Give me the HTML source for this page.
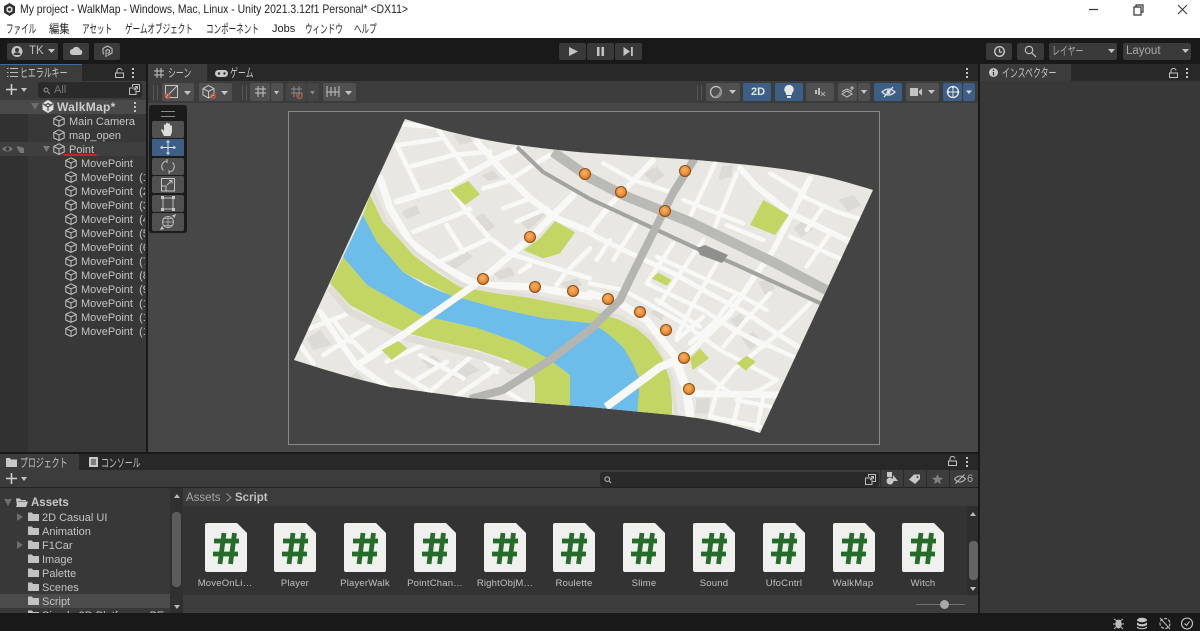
<!DOCTYPE html>
<html><head><meta charset="utf-8"><style>
html{background:#191919}
html,body{margin:0;padding:0;width:1200px;height:631px;overflow:hidden}
body{position:relative;background:#191919;font-family:"Liberation Sans","Noto Sans CJK JP",sans-serif;color:#c4c4c4;font-size:11px;filter:blur(.35px)}
.a{position:absolute}
.t{position:absolute;white-space:nowrap;line-height:14px}
.j{position:absolute;white-space:nowrap;line-height:14px;font-size:12px;transform:scaleX(.66);transform-origin:0 50%}
.m{position:absolute;white-space:nowrap;line-height:14px;font-size:12px;color:#222;top:22px;transform:scaleX(.63);transform-origin:0 50%}
.b{position:absolute;background:#505050;border-radius:2px}
.bl{position:absolute;background:#3e5f85;border-radius:2px}
.row{position:absolute;white-space:nowrap;line-height:14px;height:14px;font-size:11px;margin-top:1px}
.lab{position:absolute;width:70px;text-align:center;font-size:9.5px;color:#c0c0c0;letter-spacing:.2px;line-height:12px}
svg{position:absolute;overflow:visible}
</style></head><body>
<svg width="0" height="0" style="position:absolute"><defs>
<g id="cube"><path d="M6 .8 11.200 3.400V9L6 11.400.8 9V3.400ZM.8 3.400 6 6 11.200 3.400M6 6V11.400" fill="none" stroke="#c4c4c4" stroke-width="1"/></g>
<g id="folder"><path d="M0 1.500h4l1 1.500h6v7H0z" fill="#c2c2c2"/></g>
<g id="cs"><path d="M0 2a2 2 0 0 1 2-2H32L42 10V47a2 2 0 0 1-2 2H2a2 2 0 0 1-2-2Z" fill="#f0f0ee"/><path d="M19 10 15 41M29.500 10 25.500 41M9 18H34M8 31H33" fill="none" stroke="#256c2a" stroke-width="4.800"/></g>
<g id="tri"><path d="M0 0H7L3.500 4Z" fill="#c4c4c4"/></g>
<g id="dots"><rect x="0" y="0" width="2" height="2" fill="#c4c4c4"/><rect x="0" y="4" width="2" height="2" fill="#c4c4c4"/><rect x="0" y="8" width="2" height="2" fill="#c4c4c4"/></g>
<g id="lock"><path d="M2 5V2.500a2.500 2 0 0 1 5 0M.5 5H8.500V9.500H.5Z" fill="none" stroke="#c4c4c4" stroke-width="1"/></g>
<radialGradient id="mk" cx=".45" cy=".4" r=".6"><stop offset="0" stop-color="#f7b566"/><stop offset=".7" stop-color="#ea8a34"/><stop offset="1" stop-color="#c46a1e"/></radialGradient>
<clipPath id="mapc"><path d="M405 119C440 130 480 140 517 145C540 148 565 151 590 153L697 160C740 164 775 167 807 173C830 177 850 183 873 190L760 433C725 422 700 418 673 415L590 407 470 398 390 387C355 379 325 370 294 360Z"/></clipPath>
</defs></svg>

<!-- title + menu -->
<div class="a" style="left:0;top:0;width:1200px;height:38px;background:#fff"></div>
<svg style="left:3px;top:3px" width="13" height="13" viewBox="0 0 13 13"><path d="M6.500 0 12 3.200V9.800L6.500 13 1 9.800V3.200Z" fill="#2e2e2e"/><path d="M6.500 3 9.500 4.700V8.300L6.500 10 3.500 8.300V4.700Z" fill="#ddd"/><circle cx="6.500" cy="6.500" r="1.500" fill="#2e2e2e"/></svg>
<div class="t" style="left:20px;top:3px;color:#222;font-size:11.600px;transform:scaleX(.9);transform-origin:0 50%">My project - WalkMap - Windows, Mac, Linux - Unity 2021.3.12f1 Personal* &lt;DX11&gt;</div>
<div class="m" style="left:6px">ファイル</div>
<div class="m" style="left:49px;transform:scaleX(.85)">編集</div>
<div class="m" style="left:82px">アセット</div>
<div class="m" style="left:125px">ゲームオブジェクト</div>
<div class="m" style="left:206px">コンポーネント</div>
<div class="t" style="left:272px;top:22px;color:#222;font-size:11px">Jobs</div>
<div class="m" style="left:305px">ウィンドウ</div>
<div class="m" style="left:354px">ヘルプ</div>
<svg style="left:1088px;top:4px" width="100" height="12" viewBox="0 0 100 12"><path d="M1 5.500H10" stroke="#333" stroke-width="1.200"/><path d="M46 3H53V11H46ZM48 3V1H55V8H53" fill="none" stroke="#333" stroke-width="1.200"/><path d="M90 1 99 10M99 1 90 10" stroke="#333" stroke-width="1"/></svg>

<!-- top toolbar -->
<div class="b" style="left:7px;top:43px;width:51px;height:17px;background:#3a3a3a"></div>
<svg style="left:11px;top:45px" width="13" height="13" viewBox="0 0 13 13"><circle cx="6" cy="6.500" r="5.500" fill="#c4c4c4"/><circle cx="6" cy="5" r="2" fill="#3a3a3a"/><path d="M2.500 10a3.500 2.800 0 0 1 7 0Z" fill="#3a3a3a"/></svg>
<div class="t" style="left:29px;top:44px;color:#bbb;font-size:11.500px">TK</div>
<svg style="left:48px;top:49px" width="7" height="4"><use href="#tri"/></svg>
<div class="b" style="left:63px;top:43px;width:26px;height:17px;background:#3a3a3a"></div>
<svg style="left:70px;top:46px" width="13" height="9" viewBox="0 0 13 9"><path d="M3 9a3 3 0 0 1-.3-6A4 4 0 0 1 10 3.500 2.800 2.800 0 0 1 10 9Z" fill="#c8c8c8"/></svg>
<div class="b" style="left:94px;top:43px;width:26px;height:17px;background:#3a3a3a"></div>
<svg style="left:102px;top:45px" width="11" height="13" viewBox="0 0 11 13"><path d="M2 9.500 1 8V3.500L5.500 1 10 3.500V8L5.500 10.500M4 12V5.500L5.500 4.500 7.500 5.500V7.500L5.500 8.500" fill="none" stroke="#bdbdbd" stroke-width="1.100"/></svg>

<div class="b" style="left:559px;top:43px;width:27px;height:17px;background:#393939"></div>
<div class="b" style="left:587px;top:43px;width:27px;height:17px;background:#393939"></div>
<div class="b" style="left:615px;top:43px;width:27px;height:17px;background:#393939"></div>
<svg style="left:569px;top:46px" width="70" height="11" viewBox="0 0 70 11"><path d="M0 1 9 5.500 0 10Z" fill="#c4c4c4"/><path d="M28 1h2.500v9H28ZM32.500 1H35v9h-2.500Z" fill="#c4c4c4"/><path d="M54.500 1 61 5.500 54.500 10Z M62 1h1.800v9H62Z" fill="#c4c4c4"/></svg>

<div class="b" style="left:986px;top:43px;width:26px;height:17px;background:#3a3a3a"></div>
<svg style="left:993px;top:45px" width="13" height="13" viewBox="0 0 13 13"><circle cx="6.500" cy="6.500" r="4.800" fill="none" stroke="#c8c8c8" stroke-width="1.400"/><path d="M6.500 3.800V7H9" fill="none" stroke="#c8c8c8" stroke-width="1.200"/></svg>
<div class="b" style="left:1017px;top:43px;width:27px;height:17px;background:#3a3a3a"></div>
<svg style="left:1024px;top:45px" width="13" height="13" viewBox="0 0 13 13"><circle cx="5" cy="5" r="3.700" fill="none" stroke="#c8c8c8" stroke-width="1.100"/><path d="M8 8 12 12" stroke="#c8c8c8" stroke-width="1.200"/></svg>
<div class="b" style="left:1049px;top:43px;width:68px;height:17px;background:#3a3a3a"></div>
<div class="j" style="left:1052px;top:44px;color:#aaa">レイヤー</div>
<svg style="left:1108px;top:49px" width="7" height="4"><use href="#tri"/></svg>
<div class="b" style="left:1123px;top:43px;width:68px;height:17px;background:#3a3a3a"></div>
<div class="t" style="left:1126px;top:44px;font-size:11.500px;color:#aaa">Layout</div>
<svg style="left:1182px;top:49px" width="7" height="4"><use href="#tri"/></svg>

<!-- hierarchy -->
<div class="a" style="left:0;top:64px;width:146px;height:388px;background:#383838;overflow:hidden">
 <div class="a" style="left:0;top:0;width:146px;height:17px;background:#282828"></div>
 <div class="a" style="left:0;top:0;width:82px;height:17px;background:#3c3c3c;border-top:1px solid #3a6d9c;box-sizing:border-box"></div>
 <div class="a" style="left:0;top:17px;width:146px;height:19px;background:#3c3c3c"></div>
 <div class="a" style="left:0;top:36px;width:28px;height:352px;background:#313131"></div>
 <div class="a" style="left:0;top:36px;width:146px;height:14px;background:#4a4a4a"></div>
 <div class="a" style="left:0;top:78px;width:146px;height:14px;background:#3f3f3f"></div>
</div>
<svg style="left:7px;top:67px" width="12" height="11" viewBox="0 0 12 11"><path d="M0 1.500h1.500M3 1.500h8M0 5.500h1.500M3 5.500h8M0 9.500h1.500M3 9.500h8" stroke="#bbb" stroke-width="1"/></svg>
<div class="j" style="left:20px;top:66px">ヒエラルキー</div>
<svg style="left:115px;top:68px" width="9" height="10"><use href="#lock"/></svg>
<svg style="left:132px;top:68px" width="2" height="10"><use href="#dots"/></svg>
<svg style="left:6px;top:84px" width="22" height="12" viewBox="0 0 22 12"><path d="M5.500 0V11M0 5.500H11" stroke="#d0d0d0" stroke-width="1.500"/><path d="M15 4H21L18 8Z" fill="#c4c4c4"/></svg>
<div class="a" style="left:38px;top:82px;width:104px;height:16px;background:#2a2a2a;border-radius:3px"></div>
<svg style="left:43px;top:87px" width="10" height="7" viewBox="0 0 10 7"><circle cx="3" cy="3" r="2" fill="none" stroke="#999"/><path d="M5 5 7 7" stroke="#999"/></svg>
<div class="t" style="left:54px;top:83px;color:#777;font-size:11px">All</div>
<svg style="left:129px;top:84px" width="11" height="11" viewBox="0 0 11 11"><path d="M3.500 3V.5H10.500V7.500H7.500M.5 4H7V10.500H.5ZM5 6 8.500 2.500M6 2.500H8.500V5" fill="none" stroke="#bbb" stroke-width="1"/></svg>
<svg style="left:31px;top:103px" width="8" height="7"><path d="M0 0H8L4 7Z" fill="#6d6d6d"/></svg>
<svg style="left:42px;top:100px" width="12" height="13" viewBox="0 0 12 13"><path d="M6 0 11.500 3.200V9.800L6 13 .5 9.800V3.200Z" fill="#e0e0e0"/><path d="M6 3.500 3 5.200 6 7 9 5.200ZM6 7V11M1 3.500 3 5.200M11 3.500 9 5.200" fill="none" stroke="#4a4a4a" stroke-width="1.200"/></svg>
<div class="row" style="left:57px;top:100px;margin-top:0;font-weight:bold;font-size:12px;color:#ccc;letter-spacing:.3px">WalkMap*</div>
<svg style="left:134px;top:102px" width="2" height="10"><use href="#dots"/></svg>
<svg style="left:53px;top:115px" width="12" height="12"><use href="#cube"/></svg>
<div class="row" style="left:69px;top:114px">Main Camera</div>
<svg style="left:53px;top:129px" width="12" height="12"><use href="#cube"/></svg>
<div class="row" style="left:69px;top:128px">map_open</div>
<svg style="left:1px;top:144px" width="26" height="10" viewBox="0 0 26 10"><path d="M1 5Q6.500 0 12 5 6.500 10 1 5Z" fill="#777"/><circle cx="6.500" cy="5" r="1.800" fill="#333"/><path d="M16 2l4 1 3 1v5h-4l-3-5Z" fill="#777"/></svg>
<svg style="left:43px;top:146px" width="7" height="7"><path d="M0 0H7L3.500 6Z" fill="#7a7a7a"/></svg>
<svg style="left:53px;top:143px" width="12" height="12"><use href="#cube"/></svg>
<div class="row" style="left:69px;top:142px">Point</div>
<div class="a" style="left:63px;top:154px;width:34px;height:2px;background:#c8232a;border-radius:1px"></div>
<div class="a" style="left:0;top:157px;width:145px;height:182px;overflow:hidden">
<svg style="left:65px;top:0" width="12" height="12"><use href="#cube"/></svg><div class="row" style="left:81px;top:-1px">MovePoint</div>
<svg style="left:65px;top:14px" width="12" height="12"><use href="#cube"/></svg><div class="row" style="left:81px;top:13px">MovePoint&nbsp; (1)</div>
<svg style="left:65px;top:28px" width="12" height="12"><use href="#cube"/></svg><div class="row" style="left:81px;top:27px">MovePoint&nbsp; (2)</div>
<svg style="left:65px;top:42px" width="12" height="12"><use href="#cube"/></svg><div class="row" style="left:81px;top:41px">MovePoint&nbsp; (3)</div>
<svg style="left:65px;top:56px" width="12" height="12"><use href="#cube"/></svg><div class="row" style="left:81px;top:55px">MovePoint&nbsp; (4)</div>
<svg style="left:65px;top:70px" width="12" height="12"><use href="#cube"/></svg><div class="row" style="left:81px;top:69px">MovePoint&nbsp; (5)</div>
<svg style="left:65px;top:84px" width="12" height="12"><use href="#cube"/></svg><div class="row" style="left:81px;top:83px">MovePoint&nbsp; (6)</div>
<svg style="left:65px;top:98px" width="12" height="12"><use href="#cube"/></svg><div class="row" style="left:81px;top:97px">MovePoint&nbsp; (7)</div>
<svg style="left:65px;top:112px" width="12" height="12"><use href="#cube"/></svg><div class="row" style="left:81px;top:111px">MovePoint&nbsp; (8)</div>
<svg style="left:65px;top:126px" width="12" height="12"><use href="#cube"/></svg><div class="row" style="left:81px;top:125px">MovePoint&nbsp; (9)</div>
<svg style="left:65px;top:140px" width="12" height="12"><use href="#cube"/></svg><div class="row" style="left:81px;top:139px">MovePoint&nbsp; (10)</div>
<svg style="left:65px;top:154px" width="12" height="12"><use href="#cube"/></svg><div class="row" style="left:81px;top:153px">MovePoint&nbsp; (11)</div>
<svg style="left:65px;top:168px" width="12" height="12"><use href="#cube"/></svg><div class="row" style="left:81px;top:167px">MovePoint&nbsp; (12)</div>
</div>

<!-- scene panel -->
<div class="a" style="left:148px;top:64px;width:830px;height:17px;background:#282828"></div>
<div class="a" style="left:148px;top:64px;width:59px;height:17px;background:#3c3c3c"></div>
<svg style="left:154px;top:68px" width="10" height="10" viewBox="0 0 10 10"><path d="M3 0V10M7 0V10M0 3H10M0 7H10" stroke="#c4c4c4" stroke-width="1"/></svg>
<div class="j" style="left:168px;top:66px">シーン</div>
<svg style="left:215px;top:70px" width="13" height="7" viewBox="0 0 13 7"><rect width="13" height="7" rx="3.500" fill="#c8c8c8"/><circle cx="4" cy="3.500" r="1.200" fill="#333"/><circle cx="9.500" cy="3.500" r="1.200" fill="#333"/></svg>
<div class="j" style="left:230px;top:66px">ゲーム</div>
<svg style="left:966px;top:68px" width="2" height="10"><use href="#dots"/></svg>
<div class="a" style="left:148px;top:81px;width:830px;height:22px;background:#3c3c3c"></div>
<div class="a" style="left:148px;top:103px;width:830px;height:349px;background:#474747"></div>
<div class="a" style="left:153px;top:85px;width:3px;height:15px;border-left:1px solid #555;border-right:1px solid #555"></div>
<div class="b" style="left:162px;top:83px;width:32px;height:18px"></div>
<svg style="left:165px;top:85px" width="27" height="14" viewBox="0 0 27 14"><path d="M.5.5H12.500V12.500H.5ZM1 12 12 1" fill="none" stroke="#c4c4c4"/><circle cx="2.500" cy="11" r="2.200" fill="none" stroke="#d0563a" stroke-width="1.400"/><path d="M19 6H26L22.500 10Z" fill="#c4c4c4"/></svg>
<div class="b" style="left:199px;top:83px;width:33px;height:18px"></div>
<svg style="left:202px;top:85px" width="27" height="14" viewBox="0 0 27 14"><path d="M6.500.5 12 3.500V10L6.500 13 1 10V3.500ZM1 3.500 6.500 6.500 12 3.500M6.500 6.500V13" fill="none" stroke="#c4c4c4"/><circle cx="11" cy="11" r="2.200" fill="none" stroke="#d0563a" stroke-width="1.400"/><path d="M19 6H26L22.500 10Z" fill="#c4c4c4"/></svg>
<div class="a" style="left:242px;top:85px;width:3px;height:15px;border-left:1px solid #555;border-right:1px solid #555"></div>
<div class="b" style="left:250px;top:83px;width:20px;height:18px"></div><div class="b" style="left:271px;top:83px;width:12px;height:18px"></div>
<svg style="left:254px;top:85px" width="26" height="14" viewBox="0 0 26 14"><path d="M4 1V12M9 1V12M1 4H12M1 8H12" stroke="#c4c4c4"/><path d="M20 6H25L22.500 9.500Z" fill="#c4c4c4"/></svg>
<div class="b" style="left:286px;top:83px;width:20px;height:18px;background:#454545"></div><div class="b" style="left:307px;top:83px;width:12px;height:18px;background:#454545"></div>
<svg style="left:290px;top:85px" width="26" height="14" viewBox="0 0 26 14"><path d="M4 1V12M9 1V12M1 4H12M1 8H12" stroke="#8a8a8a"/><path d="M7 8V11A2.500 2.500 0 0 0 12 11V8" fill="none" stroke="#c2603c" stroke-width="1.300"/><path d="M20 6H25L22.500 9.500Z" fill="#888"/></svg>
<div class="b" style="left:323px;top:83px;width:33px;height:18px"></div>
<svg style="left:326px;top:85px" width="27" height="14" viewBox="0 0 27 14"><path d="M1 1V12M13 1V12M5 2V11M9 2V11M1 7H13" stroke="#c4c4c4"/><path d="M19 6H26L22.500 10Z" fill="#c4c4c4"/></svg>

<div class="a" style="left:697px;top:85px;width:3px;height:15px;border-left:1px solid #555;border-right:1px solid #555"></div>
<div class="b" style="left:706px;top:83px;width:34px;height:18px"></div>
<svg style="left:709px;top:85px" width="28" height="14" viewBox="0 0 28 14"><circle cx="7" cy="7" r="5.500" fill="none" stroke="#c8c8c8" stroke-width="1.200"/><path d="M11 3A5.500 5.500 0 0 1 4 11.500Q11 11 11 3Z" fill="#8e8e8e"/><path d="M20 5H27L23.500 9Z" fill="#c4c4c4"/></svg>
<div class="bl" style="left:743px;top:83px;width:28px;height:18px"></div>
<div class="t" style="left:751px;top:85px;font-size:11px;font-weight:bold;color:#dde6ef">2D</div>
<div class="bl" style="left:775px;top:83px;width:28px;height:18px"></div>
<svg style="left:784px;top:85px" width="10" height="14" viewBox="0 0 10 14"><path d="M5 0a4.500 4.500 0 0 1 3 8V10H2V8A4.500 4.500 0 0 1 5 0ZM3 11H7V13H3Z" fill="#e6e6e6"/></svg>
<div class="b" style="left:806px;top:83px;width:28px;height:18px"></div>
<svg style="left:815px;top:87px" width="11" height="10" viewBox="0 0 11 10"><path d="M0 3H2V7H0ZM3 1H5V8H3Z" fill="#bbb"/><path d="M6 5 10 9M10 5 6 9" stroke="#aaa"/></svg>
<div class="b" style="left:838px;top:83px;width:19px;height:18px"></div><div class="b" style="left:858px;top:83px;width:12px;height:18px"></div>
<svg style="left:841px;top:86px" width="27" height="12" viewBox="0 0 27 12"><path d="M1 8 6 5 11 8 6 11ZM1 5.500 6 3 11 5.500" fill="none" stroke="#c4c4c4"/><path d="M11 0V4M9 2H13" stroke="#c4c4c4"/><path d="M20 4H26L23 8Z" fill="#c4c4c4"/></svg>
<div class="bl" style="left:874px;top:83px;width:28px;height:18px"></div>
<svg style="left:881px;top:86px" width="15" height="12" viewBox="0 0 15 12"><path d="M1 6Q7.500 0 14 6 7.500 12 1 6ZM3 11 12 1" fill="none" stroke="#e2e2e2" stroke-width="1.300"/><circle cx="7.500" cy="6" r="2" fill="#e2e2e2"/></svg>
<div class="b" style="left:906px;top:83px;width:33px;height:18px"></div>
<svg style="left:910px;top:87px" width="26" height="10" viewBox="0 0 26 10"><path d="M0 1H8V9H0ZM9 4 12 1.500V8.500L9 6Z" fill="#c4c4c4"/><path d="M18 3H25L21.500 7Z" fill="#c4c4c4"/></svg>
<div class="bl" style="left:943px;top:83px;width:19px;height:18px"></div><div class="bl" style="left:963px;top:83px;width:12px;height:18px"></div>
<svg style="left:946px;top:85px" width="27" height="14" viewBox="0 0 27 14"><circle cx="7" cy="7" r="5.500" fill="none" stroke="#e4e4e4" stroke-width="1.300"/><path d="M1.500 7H12.500M7 1.500V12.500" stroke="#e4e4e4"/><circle cx="7" cy="2" r="1.300" fill="#e4e4e4"/><circle cx="2" cy="7" r="1.300" fill="#e4e4e4"/><circle cx="12" cy="7" r="1.300" fill="#e4e4e4"/><path d="M20 5.500H26L23 9Z" fill="#d4dde6"/></svg>

<!-- scene frame -->
<div class="a" style="left:288px;top:111px;width:590px;height:332px;border:1px solid #8a8a8a;background:#444"></div>

<!-- map -->
<svg style="left:0;top:0" width="1200" height="631" viewBox="0 0 1200 631">
<g clip-path="url(#mapc)">
<rect x="280" y="110" width="600" height="330" fill="#e9e7e1"/>
<g transform="translate(290 115) scale(.33333)">
<g fill="#dcdad4"><path d="M335 290 380 270 390 295 350 312Z"/><path d="M575 180 610 165 630 190 595 198Z"/><path d="M550 310 580 295 615 335 590 352Z"/><path d="M690 320 750 290 765 300 715 345Z"/><path d="M470 445 530 410 550 425 495 462Z"/><path d="M610 475 660 455 675 480 630 495Z"/><path d="M810 505 860 490 880 510 830 520Z"/><path d="M50 670 90 645 125 690 70 705Z"/><path d="M395 735 430 720 465 750 430 770Z"/><path d="M470 780 530 740 570 765 510 795Z"/><path d="M630 750 680 735 710 770 660 780Z"/><path d="M175 790 200 770 230 800 200 810Z"/><path d="M490 60 530 55 550 80 510 90Z"/></g>
<g fill="none" stroke="#f8f8f7" stroke-width="14" stroke-linejoin="round" stroke-linecap="round">
<path d="M340 28 430 35"/><path d="M325 90 450 72"/><path d="M445 45 530 165"/><path d="M560 80 640 170 720 250 800 310 900 350" stroke-width="20"/><path d="M320 90 390 235"/><path d="M360 155 490 120 600 110"/><path d="M320 260 480 210 620 130 690 100" stroke-width="18"/><path d="M270 190 300 280 360 380 450 450 560 510 720 515 900 545" stroke-width="22"/><path d="M480 215 530 290 600 370 670 420 800 460 900 490"/><path d="M370 350 500 300 540 282"/><path d="M470 330 520 410"/><path d="M450 440 600 370"/><path d="M580 220 650 200 730 150 780 120"/><path d="M640 280 720 250"/><path d="M680 320 770 280"/><path d="M850 240 720 370 580 490" stroke-width="20"/><path d="M690 470 720 450"/><path d="M800 510 830 470 900 400"/><path d="M90 590 150 680 200 750 270 800 340 850" stroke-width="18"/><path d="M60 640 190 590"/><path d="M30 690 70 745"/><path d="M100 720 250 625"/><path d="M130 615 180 680"/><path d="M180 670 230 720"/><path d="M290 740 420 680"/><path d="M370 800 470 740"/><path d="M320 770 420 830"/><path d="M390 720 520 790"/><path d="M420 830 560 710"/><path d="M490 850 650 740"/><path d="M560 710 620 770"/><path d="M650 830 700 860"/></g>
</g>
<g transform="translate(590 150) scale(.33333)">
<g fill="#dcdad4"><path d="M160 70 200 50 225 75 190 100Z"/><path d="M395 50 430 45 425 80 385 90Z"/><path d="M610 235 640 210 670 235 635 262Z"/><path d="M745 150 790 135 815 165 775 185Z"/><path d="M180 490 200 470 225 490 215 510Z"/><path d="M420 510 450 490 470 515 440 530Z"/><path d="M455 565 490 545 515 575 480 600Z"/><path d="M505 395 535 390 555 415 525 435Z"/><path d="M320 745 360 745 355 790 315 790Z"/></g>
<g fill="none" stroke="#f8f8f7" stroke-width="13" stroke-linejoin="round" stroke-linecap="round">
<path d="M40 40 130 90 240 125"/><path d="M190 30 60 165 0 240" stroke-width="16"/><path d="M375 40 300 200"/><path d="M440 70 375 230"/><path d="M450 55 500 110 600 190 750 260 800 285" stroke-width="18"/><path d="M660 85 550 300 500 370 420 490 280 625" stroke-width="17"/><path d="M540 70 640 130"/><path d="M640 140 740 185 820 210"/><path d="M280 150 460 220"/><path d="M410 225 520 270"/><path d="M700 170 650 240"/><path d="M720 250 650 350"/><path d="M600 260 760 330"/><path d="M0 250 100 300 250 370 340 420 470 490 560 550 640 600" stroke-width="15"/><path d="M140 220 70 330"/><path d="M60 270 20 330"/><path d="M250 280 170 400"/><path d="M340 270 270 370 210 460"/><path d="M200 320 440 430 530 480"/><path d="M170 400 340 480 430 540 610 620"/><path d="M0 400 100 420 280 520 390 600 560 690"/><path d="M380 340 310 460 260 560"/><path d="M440 430 370 520 300 580"/><path d="M660 460 590 530 430 660 380 720"/><path d="M540 430 460 520 400 590"/><path d="M300 730 570 735" stroke-width="20"/><path d="M260 640 290 720 300 800" stroke-width="26"/><path d="M0 430 90 460 170 510 240 600 275 640" stroke-width="22"/><path d="M330 660 420 730"/><path d="M380 730 360 800"/><path d="M450 740 430 820"/><path d="M520 740 500 840"/><path d="M360 800 510 830"/><path d="M440 750 540 770"/><path d="M560 690 510 720 450 740"/><path d="M260 570 340 500"/><path d="M370 500 520 590"/><path d="M200 450 330 530"/></g>
</g>
<path d="M330 288 350 312 407 338 477 355 530 374" fill="none" stroke="#e0ddd6" stroke-width="7"/>
<path d="M372 190 385 220 415 253 462 285 530 296 590 308 622 318 652 338 672 378 676 415" fill="none" stroke="#e2dfd8" stroke-width="4"/>
<path d="M370 195 383 222 400 240 413 255 436 272 460 287 495 293 530 298 560 304 590 310 620 320 637 329 650 340 662 358 670 380 672 400 672 420 636 420 640 380 623 347 603 330 590 323 543 318 497 308 450 295 403 272 377 242 363 215Z" fill="#c3d664"/>
<path d="M343 257 330 283 350 305 380 321 407 333 442 342 477 350 505 359 530 370 535 382 535 410 572 410 570 375 547 358 517 342 477 328 420 315 367 285Z" fill="#c3d664"/>
<path d="M363 215 377 242 403 272 425 285 450 295 497 308 543 318 590 323 603 330 613 338 623 347 632 362 640 380 637 415 570 410 570 375 547 358 517 342 477 328 420 315 367 285 343 257Z" fill="#6dbdea"/>
<path d="M483 279 407 332 358 365" fill="none" stroke="#f8f8f7" stroke-width="7"/>
<path d="M683 358 660 367 606 407" fill="none" stroke="#f8f8f7" stroke-width="8"/>
<g fill="#c3d664" transform="translate(290 115) scale(.33333)"><path d="M480 225 535 198 570 238 525 270Z"/><path d="M795 318 855 352 810 415 760 430 700 405 750 370Z"/><path d="M275 705 325 678 352 700 305 735Z"/></g>
<g fill="#c3d664" transform="translate(590 150) scale(.33333)"><path d="M520 150 597 195 555 255 480 225Z"/><path d="M205 368 245 390 230 407 185 385Z"/><path d="M330 595 357 625 308 660 300 625Z"/><path d="M470 617 497 635 467 662 440 640Z"/></g>
<path d="M553 152 590 178 623 195 690 222 773 262 830 292" fill="none" stroke="#b9b9b6" stroke-width="10"/>
<path d="M517 147 543 172 590 199 657 230 700 250 730 262 822 304" fill="none" stroke="#a3a3a1" stroke-width="4"/>
<path d="M697 248 705 245 728 255 722 263 700 255Z" fill="#8f8f8d"/>
<path d="M695 158 673 193 653 233 633 273 620 300 590 330 547 362 503 390 470 399" fill="none" stroke="#b4b4b1" stroke-width="8" stroke-linejoin="round"/>
</g>
<g fill="url(#mk)" stroke="#8a4d18" stroke-width="1">
<circle cx="585" cy="174" r="5.500"/><circle cx="621" cy="192" r="5.500"/><circle cx="685" cy="171" r="5.500"/><circle cx="665" cy="211" r="5.500"/><circle cx="530" cy="237" r="5.500"/><circle cx="483" cy="279" r="5.500"/><circle cx="535" cy="287" r="5.500"/><circle cx="573" cy="291" r="5.500"/><circle cx="608" cy="299" r="5.500"/><circle cx="640" cy="312" r="5.500"/><circle cx="666" cy="330" r="5.500"/><circle cx="684" cy="358" r="5.500"/><circle cx="689" cy="389" r="5.500"/>
</g>
</svg>

<!-- tool palette -->
<div class="a" style="left:149px;top:105px;width:38px;height:128px;background:#1b1b1b;border-radius:3px"></div>
<div class="a" style="left:161px;top:111px;width:14px;height:4px;border-top:1px solid #888;border-bottom:1px solid #888"></div>
<div class="b" style="left:152px;top:121px;width:32px;height:17px"></div>
<div class="bl" style="left:152px;top:139px;width:32px;height:17px;border-radius:0"></div>
<div class="b" style="left:152px;top:158px;width:32px;height:17px"></div>
<div class="b" style="left:152px;top:176px;width:32px;height:17px"></div>
<div class="b" style="left:152px;top:195px;width:32px;height:17px"></div>
<div class="b" style="left:152px;top:213px;width:32px;height:18px"></div>
<svg style="left:160px;top:122px" width="16" height="15" viewBox="0 0 16 15"><path d="M4 14 1 8 2 7 4 9V3L5 2 6 3V7 1.500L7 .5 8 1.500V7 2L9 1 10 2V7 4L11 3 12 4V10L10.500 14Z" fill="#dcdcdc"/></svg>
<svg style="left:160px;top:140px" width="16" height="15" viewBox="0 0 16 15"><path d="M8 2V13M2 7.500H14" stroke="#d8e2ec" stroke-width="1"/><path d="M8 0 10 2.500H6ZM8 15 10 12.500H6ZM0 7.500 2.500 5.500V9.500ZM16 7.500 13.500 5.500V9.500Z" fill="#d8e2ec"/></svg>
<svg style="left:161px;top:159px" width="14" height="15" viewBox="0 0 14 15"><path d="M2.500 11.500A5.500 5.500 0 0 1 6 2M11.500 3.500A5.500 5.500 0 0 1 8 13M6 0V4M8 11V15" fill="none" stroke="#b8b8b8" stroke-width="1.100"/></svg>
<svg style="left:161px;top:177px" width="14" height="15" viewBox="0 0 14 15"><path d="M.5 1.500H13.500V14H.5ZM.5 9H5V14M6 8 11 3.500M8 3.500H11V6.500" fill="none" stroke="#c8c8c8" stroke-width="1"/></svg>
<svg style="left:161px;top:196px" width="14" height="15" viewBox="0 0 14 15"><path d="M2 2H12V13H2Z" fill="none" stroke="#bbb" stroke-width="1"/><path d="M0 0h3v3H0ZM11 0h3v3h-3ZM0 12h3v3H0ZM11 12h3v3h-3Z" fill="#c8c8c8"/></svg>
<svg style="left:160px;top:214px" width="16" height="16" viewBox="0 0 16 16"><circle cx="8" cy="8" r="5.500" fill="none" stroke="#b8b8b8"/><path d="M2.500 8H13.500M8 2.500V13.500M4 4.500H12M4 11.500H12" stroke="#b8b8b8" stroke-width=".8"/><path d="M0 16 2 12 4 15ZM16 0 12 1.500 14.500 4Z" fill="#c8c8c8"/></svg>

<!-- inspector -->
<div class="a" style="left:980px;top:64px;width:220px;height:17px;background:#282828"></div>
<div class="a" style="left:980px;top:64px;width:91px;height:17px;background:#3c3c3c"></div>
<div class="a" style="left:980px;top:81px;width:220px;height:532px;background:#383838"></div>
<svg style="left:989px;top:68px" width="9" height="9" viewBox="0 0 9 9"><circle cx="4.500" cy="4.500" r="4.500" fill="#c8c8c8"/><path d="M4.500 1.500V3M4.500 4V7.500" stroke="#333" stroke-width="1.300"/></svg>
<div class="j" style="left:1002px;top:66px">インスペクター</div>
<svg style="left:1169px;top:68px" width="9" height="10"><use href="#lock"/></svg>
<svg style="left:1186px;top:68px" width="2" height="10"><use href="#dots"/></svg>

<!-- project panel -->
<div class="a" style="left:0;top:453px;width:979px;height:17px;background:#282828"></div>
<div class="a" style="left:0;top:453px;width:79px;height:17px;background:#3c3c3c"></div>
<div class="a" style="left:0;top:470px;width:979px;height:18px;background:#3c3c3c;border-bottom:1px solid #222;box-sizing:border-box"></div>
<svg style="left:6px;top:458px" width="11" height="9"><path d="M0 0H4L5 1.500H11V9H0Z" fill="#c8c8c8"/></svg>
<div class="j" style="left:20px;top:456px">プロジェクト</div>
<svg style="left:89px;top:457px" width="9" height="10" viewBox="0 0 9 10"><path d="M0 0H9V10H0Z" fill="#c8c8c8"/><path d="M2 3H7M2 5H7M2 7H7" stroke="#333"/></svg>
<div class="j" style="left:101px;top:456px">コンソール</div>
<svg style="left:948px;top:456px" width="9" height="10"><use href="#lock"/></svg>
<svg style="left:966px;top:457px" width="2" height="10"><use href="#dots"/></svg>
<svg style="left:6px;top:473px" width="22" height="12" viewBox="0 0 22 12"><path d="M5.500 0V11M0 5.500H11" stroke="#d0d0d0" stroke-width="1.500"/><path d="M15 4H21L18 8Z" fill="#c4c4c4"/></svg>
<div class="a" style="left:600px;top:472px;width:279px;height:15px;background:#2a2a2a;border-radius:3px"></div>
<svg style="left:604px;top:476px" width="8" height="7" viewBox="0 0 10 9"><circle cx="4" cy="4" r="3" fill="none" stroke="#aaa" stroke-width="1.500"/><path d="M6 6 9 9" stroke="#aaa" stroke-width="1.500"/></svg>
<svg style="left:865px;top:474px" width="11" height="11" viewBox="0 0 11 11"><path d="M3.500 3V.5H10.500V7.500H7.500M.5 4H7V10.500H.5ZM5 6 8.500 2.500M6 2.500H8.500V5" fill="none" stroke="#bbb" stroke-width="1"/></svg>
<div class="a" style="left:880px;top:470px;width:1px;height:18px;background:#2a2a2a"></div>
<div class="a" style="left:903px;top:470px;width:1px;height:18px;background:#2a2a2a"></div>
<div class="a" style="left:926px;top:470px;width:1px;height:18px;background:#2a2a2a"></div>
<div class="a" style="left:949px;top:470px;width:1px;height:18px;background:#2a2a2a"></div>
<svg style="left:886px;top:472px" width="12" height="13" viewBox="0 0 12 13"><path d="M1 0H6V5H1Z" fill="#c8c8c8"/><circle cx="4" cy="9" r="3.500" fill="#c8c8c8"/><path d="M7 3 12 9H7Z" fill="#c8c8c8"/></svg>
<svg style="left:909px;top:474px" width="11" height="10" viewBox="0 0 11 10"><path d="M0 5.500 5 .5H11V5L6 10Z" fill="#c8c8c8"/><circle cx="8.500" cy="3" r="1" fill="#3c3c3c"/></svg>
<svg style="left:932px;top:474px" width="11" height="10" viewBox="0 0 11 10"><path d="M5.500 0 7 3.500 11 4 8 6.500 9 10 5.500 8 2 10 3 6.500 0 4 4 3.500Z" fill="#808080"/></svg>
<svg style="left:954px;top:474px" width="12" height="10" viewBox="0 0 12 10"><path d="M.5 5Q6-1 11.500 5 6 11 .5 5ZM1.500 9.500 10.500.5" fill="none" stroke="#bbb" stroke-width="1"/></svg>
<div class="t" style="left:967px;top:472px;font-size:11px;color:#aaa">6</div>

<div class="a" style="left:0;top:488px;width:170px;height:125px;background:#383838;overflow:hidden">
 <div class="a" style="left:0;top:106px;width:170px;height:14px;background:#4b4b4b"></div>
</div>
<div class="a" style="left:170px;top:488px;width:13px;height:125px;background:#303030"></div>
<svg style="left:174px;top:494px" width="7" height="118" viewBox="0 0 7 118"><path d="M0 4H6L3 0Z M0 111H6L3 115Z" fill="#bbb"/></svg>
<div class="a" style="left:172px;top:512px;width:9px;height:75px;background:#5c5c5c;border-radius:4px"></div>
<svg style="left:4px;top:499px" width="8" height="7"><path d="M0 0H8L4 7Z" fill="#6d6d6d"/></svg>
<svg style="left:16px;top:497px" width="12" height="11"><path d="M0 1.500H4L5 3H10V4H2.500L1 9ZM0 10 2.500 4.500H12L10 10Z" fill="#c8c8c8"/></svg>
<div class="row" style="left:31px;top:495px;font-weight:bold;font-size:11.500px;color:#c8c8c8">Assets</div>
<svg style="left:17px;top:513px" width="6" height="8"><path d="M0 0 6 4 0 8Z" fill="#6d6d6d"/></svg>
<svg style="left:28px;top:511px" width="11" height="11"><use href="#folder"/></svg><div class="row" style="left:42px;top:510px">2D Casual UI</div>
<svg style="left:28px;top:525px" width="11" height="11"><use href="#folder"/></svg><div class="row" style="left:42px;top:524px">Animation</div>
<svg style="left:17px;top:541px" width="6" height="8"><path d="M0 0 6 4 0 8Z" fill="#6d6d6d"/></svg>
<svg style="left:28px;top:539px" width="11" height="11"><use href="#folder"/></svg><div class="row" style="left:42px;top:538px">F1Car</div>
<svg style="left:28px;top:553px" width="11" height="11"><use href="#folder"/></svg><div class="row" style="left:42px;top:552px">Image</div>
<svg style="left:28px;top:567px" width="11" height="11"><use href="#folder"/></svg><div class="row" style="left:42px;top:566px">Palette</div>
<svg style="left:28px;top:581px" width="11" height="11"><use href="#folder"/></svg><div class="row" style="left:42px;top:580px">Scenes</div>
<svg style="left:28px;top:595px" width="11" height="11"><use href="#folder"/></svg><div class="row" style="left:42px;top:594px">Script</div>
<div class="a" style="left:0;top:608px;width:170px;height:5px;overflow:hidden"><div class="row" style="left:42px;top:0">Simple 2D Platformer BE</div><svg style="left:28px;top:1px" width="11" height="11"><use href="#folder"/></svg></div>

<div class="a" style="left:183px;top:488px;width:796px;height:18px;background:#3c3c3c"></div>
<div class="t" style="left:186px;top:491px;font-size:11.500px;color:#a8a8a8">Assets</div>
<svg style="left:226px;top:493px" width="6" height="9"><path d="M.5.5 5 4.500 .5 8.500" fill="none" stroke="#999"/></svg>
<div class="t" style="left:235px;top:491px;font-size:11.500px;font-weight:bold;color:#c0c0c0">Script</div>
<div class="a" style="left:183px;top:506px;width:796px;height:89px;background:#333"></div>
<div class="a" style="left:183px;top:595px;width:796px;height:18px;background:#3c3c3c"></div>
<div class="a" style="left:967px;top:506px;width:12px;height:89px;background:#2e2e2e"></div>
<svg style="left:970px;top:512px" width="7" height="80" viewBox="0 0 7 80"><path d="M0 4H6L3 0Z M0 75H6L3 79Z" fill="#bbb"/></svg>
<div class="a" style="left:969px;top:541px;width:9px;height:39px;background:#646464;border-radius:4px"></div>
<div class="a" style="left:916px;top:604px;width:49px;height:1px;background:#707070"></div>
<div class="a" style="left:940px;top:600px;width:9px;height:9px;background:#a8a8a8;border-radius:50%"></div>

<svg style="left:205px;top:523px" width="42" height="49"><use href="#cs"/></svg>
<svg style="left:274px;top:523px" width="42" height="49"><use href="#cs"/></svg>
<svg style="left:344px;top:523px" width="42" height="49"><use href="#cs"/></svg>
<svg style="left:414px;top:523px" width="42" height="49"><use href="#cs"/></svg>
<svg style="left:484px;top:523px" width="42" height="49"><use href="#cs"/></svg>
<svg style="left:553px;top:523px" width="42" height="49"><use href="#cs"/></svg>
<svg style="left:623px;top:523px" width="42" height="49"><use href="#cs"/></svg>
<svg style="left:693px;top:523px" width="42" height="49"><use href="#cs"/></svg>
<svg style="left:763px;top:523px" width="42" height="49"><use href="#cs"/></svg>
<svg style="left:833px;top:523px" width="42" height="49"><use href="#cs"/></svg>
<svg style="left:902px;top:523px" width="42" height="49"><use href="#cs"/></svg>
<div class="lab" style="left:190px;top:578px">MoveOnLi…</div>
<div class="lab" style="left:260px;top:578px">Player</div>
<div class="lab" style="left:330px;top:578px">PlayerWalk</div>
<div class="lab" style="left:400px;top:578px">PointChan…</div>
<div class="lab" style="left:470px;top:578px">RightObjM…</div>
<div class="lab" style="left:539px;top:578px">Roulette</div>
<div class="lab" style="left:609px;top:578px">Slime</div>
<div class="lab" style="left:679px;top:578px">Sound</div>
<div class="lab" style="left:749px;top:578px">UfoCntrl</div>
<div class="lab" style="left:818px;top:578px">WalkMap</div>
<div class="lab" style="left:888px;top:578px">Witch</div>

<div class="a" style="left:146px;top:64px;width:2px;height:389px;background:#191919"></div>
<div class="a" style="left:978px;top:64px;width:2px;height:549px;background:#191919"></div>
<div class="a" style="left:0;top:452px;width:979px;height:2px;background:#191919"></div>
<div class="a" style="left:0;top:613px;width:1200px;height:18px;background:#191919"></div>

<!-- status -->
<svg style="left:1112px;top:617px" width="80" height="13" viewBox="0 0 80 13"><path d="M2 2 5 4H8L11 2M1 7H12M2 12 5 9M11 12 8 9" stroke="#bbb" fill="none"/><ellipse cx="6.500" cy="7" rx="3.200" ry="4.500" fill="#bbb"/><ellipse cx="30" cy="3" rx="5" ry="2.200" fill="#c8c8c8"/><path d="M25 5.500Q30 9 35 5.500V8Q30 11 25 8ZM25 9.500Q30 13 35 9.500V11Q30 13.500 25 11Z" fill="#c8c8c8"/><circle cx="53" cy="6.500" r="5" fill="none" stroke="#bbb" stroke-width="1.200" stroke-dasharray="3 1.500"/><path d="M48 1 58 12" stroke="#bbb"/><circle cx="75" cy="6.500" r="5.500" fill="none" stroke="#c8c8c8" stroke-width="1.100"/><path d="M72.500 6.500 74.500 8.500 77.500 4.500" fill="none" stroke="#c8c8c8"/></svg>
</body></html>
